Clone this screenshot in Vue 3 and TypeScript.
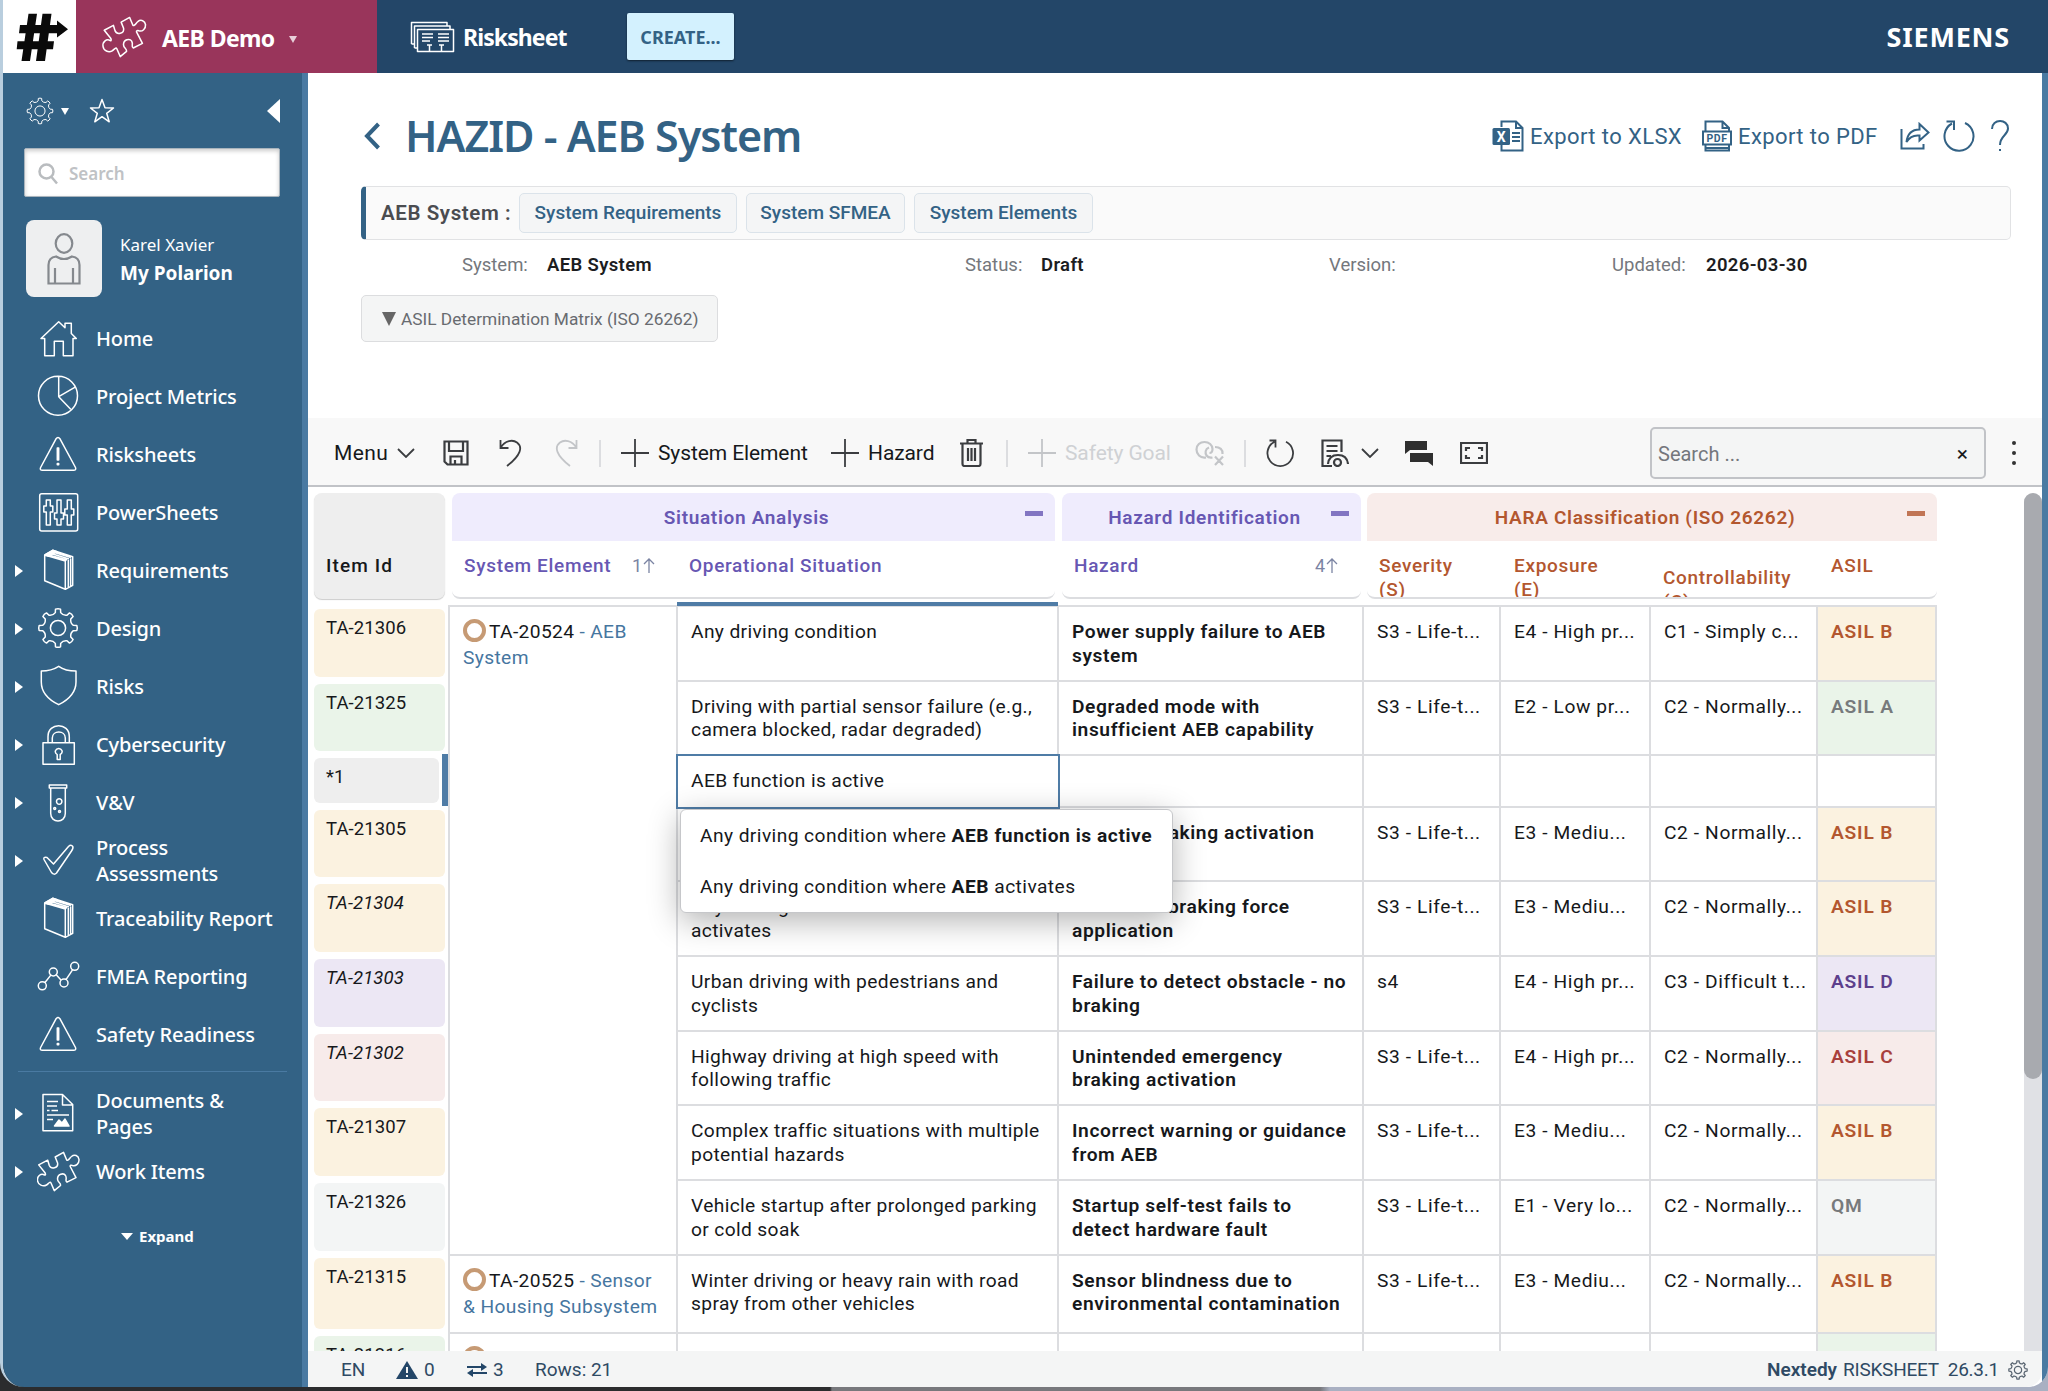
<script setup lang="ts">
import { ref } from "vue";

interface NavItem {
  label: string;
  icon: string;
  arrow?: boolean;
}

interface Row {
  id: string;
  level: string;
  situation: string;
  hazard: string;
  s: string;
  e: string;
  c: string;
  asil: string;
  italic?: boolean;
  size?: string;
}

// Outline of a cog with rounded teeth
const gear = (c: number, outer: number, inner: number, teeth: number, hole: number) => {
  const step = (Math.PI * 2) / teeth;
  const pt = (r: number, a: number) =>
    `${(c + r * Math.sin(a)).toFixed(2)} ${(c - r * Math.cos(a)).toFixed(2)}`;
  let d = `M${pt(outer, -step * 0.17)}`;
  for (let i = 0; i < teeth; i++) {
    const a = i * step;
    d += `Q${pt(outer + 0.8, a)} ${pt(outer, a + step * 0.17)}`;
    d += `L${pt(inner + 0.8, a + step * 0.22)}`;
    d += `Q${pt(inner - 1.6, a + step * 0.5)} ${pt(inner + 0.8, a + step * 0.78)}`;
    d += `L${pt(outer, a + step * 0.83)}`;
  }
  return `${d}ZM${c - hole} ${c}a${hole} ${hole} 0 1 0 ${hole * 2} 0a${hole} ${hole} 0 1 0 ${-hole * 2} 0`;
};

const puzzle =
  "M1.7 14.9L10.7 10.2L12.3 15.5C14 19.5 21.5 18.5 20.6 13L18.2 7L26.5 2.4L29.7 10C31 11.5 33 7.5 34.5 6.5C37.5 4 41.5 5.5 42 9.5C42.3 13.5 39 16.5 35.5 15.5C34 15 33 15.2 33.2 16.5L39 27.7L30 32.2C27.5 30.5 30.5 29 28.5 25.5C26.5 22.5 20.5 24 20.5 29C20.5 32.5 24 32.5 23.5 35.5L17.3 40.6L14 33C13 31 11.3 34 9.5 35C6 37 1 35 0.5 30.5C0 26 4 22.8 7.5 25C9 25.5 8.5 23.5 7.8 22.5Z";

const icons: Record<string, string> = {
  home: "M7.7 21.5V38.7H17.3V24.3H26.3V38.7H36V21.5H39.3L34.3 16.5V6.3H28V10.8L21.7 4.7L4 21.5Z",
  pie: "M1.5 20.7a19.5 19.5 0 1 0 39 0a19.5 19.5 0 1 0 -39 0M21.7 1.2V21.7L37.7 12.3M21.7 21.7L33.7 34.3",
  warn: "M19 5.8Q21 3 23 5.8L38.5 34.5Q39.5 37.3 36.5 37.3H5.5Q2.5 37.3 3.6 34.5ZM20.3 15h1.4v12h-1.4ZM20.3 30.5h1.4v1.2h-1.4Z",
  sliders:
    "M4.7 2.7H38.7Q40.7 2.7 40.7 4.7V38Q40.7 40 38.7 40H4.7Q2.7 40 2.7 38V4.7Q2.7 2.7 4.7 2.7ZM9.3 9h4v6h2.5v6h-2.5v13h-4v-13h-2.5v-6h2.5ZM20 9h4v13h2.5v6h-2.5v6h-4v-6h-2.5v-6h2.5ZM30.3 9h4v9h2.5v6h-2.5v10h-4v-10h-2.5v-6h2.5Z",
  book: "M7.7 6L28.3 12V40.3L7.7 31.7ZM7.7 6L15.7 1.3L35.7 7.7V36.3L28.3 40.3M31.3 11V38M33.6 9.5V37M10 5.5L30 11M12.5 4L32 10M14 2.5L34 8.5",
  gear: gear(21, 19, 14.8, 8, 7.6),
  shield:
    "M21.7 1.3C16 5 10 6 4.3 6V17C4.3 28 12 35 21.7 39.7C31 35 39 28 39 17V6C33 6 27 5 21.7 1.3Z",
  lock: "M6 19.7H37.3V41.3H6ZM11 19.7V13.5C11 -1 32.3 -1 32.3 13.5V19.7M15.3 19.7V15C15.3 7 28.3 7 28.3 15V19.7ZM20.2 36.5V31.5C16.5 29 19 25.5 21.7 25.5C24.5 25.5 27 29 23.2 31.5V36.5Z",
  tube: "M12.3 4H29.7V7H12.3ZM13.7 7V32.5C13.7 42.5 28.3 42.5 28.3 32.5V7M19.5 20.5a2.7 2.7 0 1 0 5.4 0a2.7 2.7 0 1 0 -5.4 0M16.7 27.5a1 1 0 1 0 2 0a1 1 0 1 0 -2 0M21.5 30.5a1 1 0 1 0 2 0a1 1 0 1 0 -2 0",
  check:
    "M7 20.5Q6 17.5 10 18.5L16.5 25L31.5 7.5Q34 5 35.8 7.5Q36.5 9 34.5 12L19.5 34Q17 36.5 14.5 33.5Z",
  chart:
    "M1.3 30.8a4 4 0 1 0 8 0a4 4 0 1 0 -8 0M12.3 17a4 4 0 1 0 8 0a4 4 0 1 0 -8 0M23 28a4 4 0 1 0 8 0a4 4 0 1 0 -8 0M33.7 11.3a4 4 0 1 0 8 0a4 4 0 1 0 -8 0M7.8 27.7L13.8 20.1M19.2 19.8L24.2 25.2M29 24.6L35.7 14.7",
  doc: "M6 2.5H25.5L35.7 12.5V38.7H6ZM25.5 2.5V13H35.7M10 9.5H21M10 14H20M10 18.5H12.5M14.5 18.5H21M10 23H32M10 27.5H16",
  puzzle,
};

const navItems: NavItem[] = [
  { label: "Home", icon: "home" },
  { label: "Project Metrics", icon: "pie" },
  { label: "Risksheets", icon: "warn" },
  { label: "PowerSheets", icon: "sliders" },
  { label: "Requirements", icon: "book", arrow: true },
  { label: "Design", icon: "gear", arrow: true },
  { label: "Risks", icon: "shield", arrow: true },
  { label: "Cybersecurity", icon: "lock", arrow: true },
  { label: "V&V", icon: "tube", arrow: true },
  { label: "Process\nAssessments", icon: "check", arrow: true },
  { label: "Traceability Report", icon: "book" },
  { label: "FMEA Reporting", icon: "chart" },
  { label: "Safety Readiness", icon: "warn" },
];

const libraryItems: NavItem[] = [
  { label: "Documents &\nPages", icon: "doc", arrow: true },
  { label: "Work Items", icon: "puzzle", arrow: true },
];

const rows: Row[] = [
  { id: "TA-21306", level: "b", situation: "Any driving condition", hazard: "Power supply failure to AEB\nsystem", s: "S3 - Life-t...", e: "E4 - High pr...", c: "C1 - Simply c...", asil: "ASIL B" },
  { id: "TA-21325", level: "a", situation: "Driving with partial sensor failure (e.g.,\ncamera blocked, radar degraded)", hazard: "Degraded mode with\ninsufficient AEB capability", s: "S3 - Life-t...", e: "E2 - Low pr...", c: "C2 - Normally...", asil: "ASIL A" },
  { id: "*1", level: "new", situation: "AEB function is active", hazard: "", s: "", e: "", c: "", asil: "", size: "51.5px" },
  { id: "TA-21305", level: "b", situation: "", hazard: "Delayed braking activation", s: "S3 - Life-t...", e: "E3 - Mediu...", c: "C2 - Normally...", asil: "ASIL B" },
  { id: "TA-21304", level: "b", italic: true, situation: "Any driving condition where AEB\nactivates", hazard: "Excessive braking force\napplication", s: "S3 - Life-t...", e: "E3 - Mediu...", c: "C2 - Normally...", asil: "ASIL B" },
  { id: "TA-21303", level: "d", italic: true, situation: "Urban driving with pedestrians and\ncyclists", hazard: "Failure to detect obstacle - no\nbraking", s: "s4", e: "E4 - High pr...", c: "C3 - Difficult t...", asil: "ASIL D" },
  { id: "TA-21302", level: "c", italic: true, situation: "Highway driving at high speed with\nfollowing traffic", hazard: "Unintended emergency\nbraking activation", s: "S3 - Life-t...", e: "E4 - High pr...", c: "C2 - Normally...", asil: "ASIL C" },
  { id: "TA-21307", level: "b", situation: "Complex traffic situations with multiple\npotential hazards", hazard: "Incorrect warning or guidance\nfrom AEB", s: "S3 - Life-t...", e: "E3 - Mediu...", c: "C2 - Normally...", asil: "ASIL B" },
  { id: "TA-21326", level: "qm", situation: "Vehicle startup after prolonged parking\nor cold soak", hazard: "Startup self-test fails to\ndetect hardware fault", s: "S3 - Life-t...", e: "E1 - Very lo...", c: "C2 - Normally...", asil: "QM" },
  { id: "TA-21315", level: "b", situation: "Winter driving or heavy rain with road\nspray from other vehicles", hazard: "Sensor blindness due to\nenvironmental contamination", s: "S3 - Life-t...", e: "E3 - Mediu...", c: "C2 - Normally...", asil: "ASIL B", size: "78px" },
  { id: "TA-21316", level: "a", situation: "Driving after vehicle windshield", hazard: "Gradually degrading", s: "S3 - Life-t...", e: "E3 - Mediu...", c: "C2 - Normally...", asil: "ASIL A" },
];

const elements = [
  { id: "TA-20524", name: "AEB\nSystem", start: 1, span: 9 },
  { id: "TA-20525", name: "Sensor\n& Housing Subsystem", start: 10, span: 1 },
  { id: "TA-20526", name: "Radar", start: 11, span: 1 },
];

const gridRows = rows.map((r) => r.size ?? "74.67px").join(" ");
const search = ref("");
const filter = ref("");
</script>

<template>
  <div class="screen">
    <div class="window">
      <header class="topbar">
        <div class="logo">
          <svg width="73" height="73" viewBox="3 0 73 73">
            <path d="M28.5 13.7H37L30 61H21.500ZM42.500 13.700H51.500L45 61H36ZM20 25H57V20.500L68 29.300L57 37.500V33.300H19ZM17.500 41.300H54L53 49.300H16.700Z" fill="#0a0a0a" />
          </svg>
        </div>
        <div class="project">
          <svg class="line" width="46" height="42" viewBox="-1 1 44 41"><path :d="puzzle" /></svg>
          <span class="project-name">AEB Demo</span>
          <span class="caret-down small" />
        </div>
        <div class="product">
          <svg class="line" width="45" height="32" viewBox="0 0 45 32">
            <path d="M7.5 8.5H43.5V30.5H7.5ZM4.5 27V5H40V8M1.5 23V1.5H37V5M1.5 23H4.5M4.5 27H7.5" />
            <path d="M12 13h11M12 16.5h11M12 20h8M28 13h11M28 16.5h11M28 20h11M17 24h5M19.5 24v6M29 24h5M31.5 24v6" />
          </svg>
          <span>Risksheet</span>
        </div>
        <button class="create">CREATE...</button>
        <span class="siemens">SIEMENS</span>
      </header>

      <div class="body">
        <nav class="sidebar">
          <div class="side-tools">
            <svg class="line" width="28" height="28" viewBox="0 0 42 42"><path :d="icons.gear" /></svg>
            <span class="caret-down" />
            <svg class="line star" width="26" height="26" viewBox="0 0 26 26">
              <path d="M13 1.5L16 9.8L24.5 10L17.7 15.3L20.2 23.8L13 18.7L5.8 23.8L8.3 15.3L1.5 10L10 9.8Z" />
            </svg>
            <span class="collapse" />
          </div>
          <div class="side-search">
            <svg width="21" height="22" viewBox="0 0 21 22" fill="none" stroke="#b9bcbf" stroke-width="2.5">
              <circle cx="8.5" cy="8.5" r="7" /><path d="M13.5 14L19 20.5" />
            </svg>
            <input v-model="search" placeholder="Search" />
          </div>
          <div class="user">
            <div class="avatar">
              <svg width="34" height="52" viewBox="0 0 34 52" fill="none" stroke="#85898e" stroke-width="2.2">
                <ellipse cx="17" cy="10.5" rx="8.3" ry="9.3" />
                <path d="M1.5 50.5V32Q1.5 24.5 9 23.5Q17 28.5 25 23.5Q32.5 24.5 32.5 32V50.5ZM8 35V50M26 35V50" />
              </svg>
            </div>
            <div>
              <div class="user-name">Karel Xavier</div>
              <div class="user-page">My Polarion</div>
            </div>
          </div>
          <ul>
            <li v-for="item in navItems" :key="item.label">
              <span class="arrow" :class="{ hidden: !item.arrow }" />
              <svg class="line" width="44" height="44" viewBox="0 0 44 44">
                <path :d="icons[item.icon]" />
                <path v-if="item.icon === 'book'" d="M8 6L15.7 1.3L20 2.7L12 7.2Z" fill="#fff" />
              </svg>
              <span class="label">{{ item.label }}</span>
            </li>
          </ul>
          <hr />
          <ul>
            <li v-for="item in libraryItems" :key="item.label">
              <span class="arrow" />
              <svg class="line" width="44" height="44" viewBox="0 0 44 44">
                <path :d="icons[item.icon]" />
                <path v-if="item.icon === 'doc'" d="M17.5 34L22 28L25 31L28 27L32 34Z" fill="#fff" />
              </svg>
              <span class="label">{{ item.label }}</span>
            </li>
          </ul>
          <div class="expand"><span class="caret-down wide" />Expand</div>
        </nav>

        <main>
          <section class="page-head">
            <div class="title-row">
              <svg class="back" width="18" height="28" viewBox="0 0 18 28"><path d="M15.5 2L4 14L15.5 26" /></svg>
              <h1>HAZID - AEB System</h1>
              <div class="actions">
                <svg width="32" height="32" viewBox="0 0 32 32">
                  <path class="ol" d="M9.5 7V1.5H24L30.5 8V30.5H9.5V25M24 1.5V8H30.5M20 13H28M20 17H28M20 21H28" />
                  <rect x="0.5" y="8" width="17.5" height="17" rx="1.5" fill="#336285" />
                  <text x="9.2" y="22" text-anchor="middle" font-size="14" font-weight="700" fill="#fff">X</text>
                </svg>
                <span class="export xlsx">Export to XLSX</span>
                <svg width="30" height="32" viewBox="0 0 30 32">
                  <path class="ol" d="M3.5 11V1.5H20.5L27 8V11M20.5 1.5V8H27M1 11.5H29V24.5H1ZM3.5 24.5V30.5H27V24.5M3.5 28H27" />
                  <text x="15" y="22" text-anchor="middle" font-size="10.5" font-weight="700" fill="#336285" letter-spacing="0.5">PDF</text>
                </svg>
                <span class="export pdf">Export to PDF</span>
                <svg class="share" width="30" height="28" viewBox="0 0 30 28">
                  <path class="ol" d="M1.5 7V26.5H23.5V22M6.5 20Q8 7.5 19.5 7.5V2L28.5 10.5L19.5 18.5V13.5Q11 12.5 6.5 20Z" />
                </svg>
                <svg class="reload" width="32" height="32" viewBox="0 0 32 32">
                  <path class="ol" d="M22 3A14.5 14.5 0 1 1 9 3.5M3.5 1.5H11V10" />
                </svg>
                <svg width="18" height="32" viewBox="0 0 18 32">
                  <path class="ol" d="M1 9C1 -1.5 17 -1.5 17 8.5C17 15 9 16 9 25M9 29V31" />
                </svg>
              </div>
            </div>
            <div class="crumbs">
              <strong>AEB System :</strong>
              <a class="w1">System Requirements</a>
              <a class="w2">System SFMEA</a>
              <a class="w3">System Elements</a>
            </div>
            <div class="info">
              <span>System:</span><b>AEB System</b>
              <span>Status:</span><b>Draft</b>
              <span>Version:</span>
              <span>Updated:</span><b>2026-03-30</b>
            </div>
            <button class="matrix"><span class="tri" />ASIL Determination Matrix (ISO 26262)</button>
          </section>

          <section class="toolbar">
            <span class="menu">Menu</span>
            <svg width="18" height="10" viewBox="0 0 18 10"><path d="M1 1L9 9L17 1" /></svg>
            <svg width="26" height="26" viewBox="0 0 26 26" class="thick">
              <path d="M1.5 1.5H24.5V24.5H4.5L1.5 21.5ZM6 1.5V11H20V1.5M7.5 24.5V16.5H18.5V24.5M12 20V24" />
            </svg>
            <svg width="23" height="28" viewBox="0 0 23 28"><path d="M1.5 1V9H9.5M1.5 9C6 1 14 0.5 18 3.5C24 8 22 16 8 27" /></svg>
            <svg width="23" height="28" viewBox="0 0 23 28" class="faded"><path d="M21.5 1V9H13.5M21.5 9C17 1 9 0.5 5 3.5C-1 8 1 16 15 27" /></svg>
            <i class="sep" />
            <span class="tool">
              <svg width="28" height="28" viewBox="0 0 28 28"><path d="M14 0V28M0 14H28" /></svg>
              <span>System Element</span>
            </span>
            <span class="tool">
              <svg width="28" height="28" viewBox="0 0 28 28"><path d="M14 0V28M0 14H28" /></svg>
              <span>Hazard</span>
            </span>
            <svg width="23" height="28" viewBox="0 0 23 28" class="thick"><path d="M0 4.5H23M7.5 4V1H15.5V4M2.5 4.5V25Q2.5 27 4.5 27H18.5Q20.5 27 20.5 25V4.5M8 9V22M11.5 9V22M15 9V22" /></svg>
            <i class="sep" />
            <span class="tool faded">
              <svg width="28" height="28" viewBox="0 0 28 28"><path d="M14 0V28M0 14H28" /></svg>
              <span>Safety Goal</span>
            </span>
            <svg width="30" height="26" viewBox="0 0 30 26" class="faded thick"><path d="M11 17.5C5 18.5 1.5 14 1.5 9.5C1.5 5 5 2 9.5 2C14 2 17.5 5 17.5 9C17.5 11.5 16 13 14.5 13M14 7.5C10 9 10 13 11.5 15.5C13 17.5 15 18 17.5 17.500M20 7C25 7 28 9.500 27.500 14M20 16.500L28 25M28 16.500L20 25" /></svg>
            <i class="sep" />
            <svg width="28" height="28" viewBox="0 0 28 28"><path d="M20 2.8A12.8 12.8 0 1 1 8.5 2.8M3.5 1.5H9.5V8.5" /></svg>
            <svg width="28" height="28" viewBox="0 0 28 28" class="thick"><path d="M11 27H1.5V1.5H20.5V13M5.5 7H16.5M5.5 12H16.5M5.5 17H10M7 25Q8 16 17 16Q26 16 27 25M13 23.5a3.5 3.5 0 1 0 7 0a3.5 3.5 0 1 0 -7 0" /></svg>
            <svg width="18" height="10" viewBox="0 0 18 10"><path d="M1 1L9 9L17 1" /></svg>
            <svg width="28" height="25" viewBox="0 0 28 25" class="solid"><path d="M0 0H22V9H5L0 13ZM5 12H28V25L23 21H5Z" /></svg>
            <svg width="28" height="22" viewBox="0 0 28 22" class="thick"><path d="M1 1H27V21H1ZM6 9V6H10M18 6H22V9M22 13V16H18M10 16H6V13" /></svg>
            <div class="filter">
              <input v-model="filter" placeholder="Search ..." />
              <span>×</span>
            </div>
            <span class="dots"><i /><i /><i /></span>
          </section>

          <section class="sheet">
            <div class="sheet-head">
              <div class="head-id">Item Id</div>
              <div class="group violet g1">
                <div class="group-title">Situation Analysis<i /></div>
                <div class="labels">
                  <span>System Element</span>
                  <em>1<svg width="12" height="15" viewBox="0 0 12 15"><path d="M6 15V1M1 6L6 1L11 6" /></svg></em>
                  <span>Operational Situation</span>
                </div>
              </div>
              <div class="group violet g2">
                <div class="group-title">Hazard Identification<i /></div>
                <div class="labels">
                  <span>Hazard</span>
                  <em>4<svg width="12" height="15" viewBox="0 0 12 15"><path d="M6 15V1M1 6L6 1L11 6" /></svg></em>
                </div>
              </div>
              <div class="group rust g3">
                <div class="group-title">HARA Classification (ISO 26262)<i /></div>
                <div class="labels">
                  <span>Severity<br />(S)</span>
                  <span>Exposure<br />(E)</span>
                  <span class="lower">Controllability<br />(C)</span>
                  <span>ASIL</span>
                </div>
              </div>
            </div>

            <div class="grid" :style="{ gridTemplateRows: gridRows }">
              <div
                v-for="el in elements"
                :key="el.id"
                class="cell element"
                :style="{ gridRow: `${el.start} / span ${el.span}` }"
              >
                <span class="ring" />{{ el.id }} <a>- {{ el.name }}</a>
              </div>
              <template v-for="(row, i) in rows" :key="row.id">
                <div class="id-cell" :class="{ current: row.level === 'new' }" :style="{ gridRow: i + 1 }">
                  <div class="pill" :class="[row.level, { italic: row.italic }]">{{ row.id }}</div>
                </div>
                <div class="cell situation" :class="{ first: i === 0 }" :style="{ gridRow: i + 1 }">
                  <div v-if="row.level === 'new'" class="editor">
                    {{ row.situation }}
                    <div class="suggest">
                      <div>Any driving condition where <b>AEB function is active</b></div>
                      <div>Any driving condition where <b>AEB</b> activates</div>
                    </div>
                  </div>
                  <template v-else>{{ row.situation }}</template>
                </div>
                <div class="cell hazard" :style="{ gridRow: i + 1 }">{{ row.hazard }}</div>
                <div class="cell rate c-s" :style="{ gridRow: i + 1 }">{{ row.s }}</div>
                <div class="cell rate c-e" :style="{ gridRow: i + 1 }">{{ row.e }}</div>
                <div class="cell rate c-c" :style="{ gridRow: i + 1 }">{{ row.c }}</div>
                <div class="cell asil" :class="row.level" :style="{ gridRow: i + 1 }">{{ row.asil }}</div>
              </template>
            </div>
            <div class="scroll"><div class="thumb" /></div>
          </section>

          <footer>
            <span>EN</span>
            <span>
              <svg width="22" height="18" viewBox="0 0 22 18"><path d="M11 0L22 18H0Z" fill="#234668" /><path d="M11 6V12M11 14V16" stroke="#f4f5f5" stroke-width="2" /></svg>
              0
            </span>
            <span>
              <svg width="20" height="14" viewBox="0 0 20 14"><path d="M0 4H16M4 10H20" stroke="#234668" stroke-width="2" /><path d="M14 0L20 4L14 8ZM6 6L0 10L6 14Z" fill="#234668" /></svg>
              3
            </span>
            <span>Rows: 21</span>
            <span class="version"><b>Nextedy</b> RISKSHEET&nbsp; 26.3.1</span>
            <svg width="20" height="20" viewBox="0 0 42 42" fill="none" stroke="#5a6672" stroke-width="2.6"><path :d="icons.gear" /></svg>
          </footer>
        </main>
      </div>
    </div>
  </div>
</template>

<style>
body {
  margin: 0;
  background: #2d2e30;
}
</style>

<style scoped>
.screen {
  width: 2048px;
  height: 1391px;
  overflow: hidden;
  background: linear-gradient(90deg, #2b2c2e 0 830px, #77787c 832px 1320px, #a9b0c2 1330px);
  font-family: Roboto, "Liberation Sans", sans-serif;
  color: #16181b;
}

.window {
  height: 1387px;
  box-sizing: border-box;
  border-left: 3px solid #b9cede;
  display: flex;
  flex-direction: column;
  border-radius: 0 0 20px 24px;
  overflow: hidden;
}

svg {
  flex: none;
  display: block;
}

.line {
  fill: none;
  stroke: #fff;
  stroke-width: 1.5;
  stroke-linejoin: round;
}

/* Top bar */
.topbar {
  height: 73px;
  flex: none;
  display: flex;
  align-items: center;
  background: #234668;
  color: #fff;
  font-family: "Noto Sans", sans-serif;
}

.logo {
  width: 73px;
  height: 73px;
  background: #fff;
}

.project {
  width: 301px;
  height: 73px;
  box-sizing: border-box;
  padding-left: 25px;
  display: flex;
  align-items: center;
  background: #99355b;
}

.project-name {
  margin: 3px 13px 0 15px;
  width: 114px;
  font-size: 23px;
  font-weight: 700;
  letter-spacing: -0.6px;
  white-space: nowrap;
}

.caret-down {
  border: 4px solid transparent;
  border-top: 7px solid #fff;
  border-bottom: 0;
}

.caret-down.small {
  margin-top: 6px;
  border-top-color: #e8cfd9;
}

.caret-down.wide {
  border-width: 7px 6px 0;
  margin-right: 6px;
}

.product {
  width: 217px;
  margin-left: 33px;
  display: flex;
  align-items: center;
  gap: 8px;
  font-size: 23px;
  font-weight: 700;
  letter-spacing: -0.9px;
}

.create {
  width: 107px;
  height: 47px;
  border: 0;
  padding: 0;
  border-radius: 2px;
  background: #d3f1fe;
  color: #336285;
  font: 700 18px "Noto Sans", sans-serif;
  letter-spacing: 0;
  box-shadow: 0 1px 2px #10202f;
}

.siemens {
  margin-left: auto;
  margin-right: 38px;
  font-size: 27px;
  font-weight: 700;
  letter-spacing: 0.8px;
}

.body {
  flex: 1;
  display: flex;
  min-height: 0;
}

/* Sidebar */
.sidebar {
  width: 305px;
  flex: none;
  box-sizing: border-box;
  border-right: 6px solid #4a7aa2;
  background: #336285;
  color: #fff;
  font-family: "Noto Sans", sans-serif;
}

.side-tools {
  height: 75px;
  box-sizing: border-box;
  padding: 1px 22px 0 23px;
  display: flex;
  align-items: center;
}

.side-tools .caret-down {
  margin-left: 7px;
}

.star {
  margin-left: 20px;
}

.collapse {
  margin-left: auto;
  border: 12px solid transparent;
  border-right: 13px solid #fff;
  border-left: 0;
}

.side-search {
  width: 256px;
  height: 49px;
  box-sizing: border-box;
  margin-left: 21px;
  padding: 2px 13px 0;
  display: flex;
  align-items: center;
  background: #fff;
  border: 1px solid #a9b4bd;
  border-radius: 2px;
  box-shadow: inset 0 2px 4px rgba(0, 0, 0, 0.2);
}

input {
  border: 0;
  outline: 0;
  background: none;
  min-width: 0;
  flex: 1;
}

.side-search input {
  margin-left: 10px;
  padding: 0;
  font: 600 17px "Noto Sans", sans-serif;
}

.side-search input::placeholder {
  color: #bfc2c5;
}

.user {
  margin: 23px 0 13px 23px;
  display: flex;
  align-items: center;
  gap: 18px;
}

.avatar {
  width: 76px;
  height: 77px;
  display: flex;
  align-items: center;
  justify-content: center;
  border-radius: 8px;
  background: #eeeff0;
}

.user-name {
  font-size: 17px;
  line-height: 28px;
}

.user-page {
  font-size: 19px;
  font-weight: 700;
  line-height: 28px;
}

ul {
  list-style: none;
  margin: 0;
  padding: 0;
}

li {
  height: 58px;
  display: flex;
  align-items: center;
}

.arrow {
  margin: 0 14px 0 12px;
  border: 6px solid transparent;
  border-left: 8px solid #fff;
  border-right: 0;
}

.arrow.hidden {
  visibility: hidden;
}

.label {
  margin-left: 15px;
  font-size: 20px;
  font-weight: 500;
  line-height: 26px;
  letter-spacing: -0.15px;
  white-space: pre-line;
}

hr {
  height: 1px;
  width: 269px;
  margin: 7px 0 13px 15px;
  border: 0;
  background: #4a7aa2;
}

.expand {
  margin-top: 25px;
  padding-left: 118px;
  display: flex;
  align-items: center;
  font-size: 15px;
  font-weight: 700;
}

/* Page header */
main {
  width: 1734px;
  display: flex;
  flex-direction: column;
  background: #fff;
  border-right: 6px solid #4a7aa2;
}

.page-head {
  height: 345px;
  box-sizing: border-box;
  padding: 27px 31px 0 53px;
}

.title-row {
  height: 72px;
  display: flex;
  align-items: center;
}

.back {
  margin-left: 2px;
}

.back path {
  fill: none;
  stroke: #336285;
  stroke-width: 4;
}

h1 {
  margin: -2px 0 0 24px;
  font: 600 43px "Noto Sans", sans-serif;
  letter-spacing: -1px;
  color: #336285;
}

.actions {
  margin: 0 2px 0 auto;
  display: flex;
  align-items: center;
}

.actions text {
  font-family: Roboto, sans-serif;
}

.ol {
  fill: none;
  stroke: #336285;
  stroke-width: 2;
}

.export {
  margin-left: 6px;
  font-size: 22px;
  letter-spacing: 0.4px;
  color: #336285;
  white-space: nowrap;
}

.xlsx {
  width: 172px;
}

.pdf {
  width: 162px;
}

.reload {
  margin: 0 16px 0 13px;
}

.crumbs {
  height: 54px;
  box-sizing: border-box;
  margin-top: 14px;
  padding-left: 15px;
  display: flex;
  align-items: center;
  gap: 9px;
  border: 1px solid #e1e2e4;
  border-left: 5px solid #336285;
  border-radius: 5px;
  background: #fafafa;
}

.crumbs strong {
  width: 129px;
  font-size: 20.5px;
  font-weight: 600;
  letter-spacing: 0.6px;
  color: #4a4c50;
  white-space: nowrap;
}

.crumbs a {
  height: 40px;
  box-sizing: border-box;
  line-height: 38px;
  text-align: center;
  border: 1px solid #dbe3ea;
  border-radius: 5px;
  background: #f4f5f6;
  color: #336285;
  font-size: 19px;
  font-weight: 500;
}

.w1 {
  width: 218px;
}

.w2 {
  width: 159px;
}

.w3 {
  width: 179px;
}

.info {
  margin-top: 13px;
  padding-left: 101px;
  display: grid;
  grid-template-columns: 85px 418px 76px 288px 283px 94px 120px;
  font-size: 18.5px;
  line-height: 24px;
  color: #74777c;
}

.info b {
  color: #1c1d1f;
  font-weight: 600;
  letter-spacing: 0.35px;
}

.matrix {
  margin-top: 18px;
  width: 357px;
  height: 47px;
  padding: 0 0 0 20px;
  display: flex;
  align-items: center;
  border: 1px solid #dcdddf;
  border-radius: 5px;
  background: #f4f5f5;
  color: #686b70;
  font: 17.3px Roboto, sans-serif;
}

.tri {
  margin-right: 5px;
  border: 7px solid transparent;
  border-top: 14px solid #666;
  border-bottom: 0;
}

/* Toolbar */
.toolbar {
  height: 69px;
  flex: none;
  box-sizing: border-box;
  padding: 3px 0 0 26px;
  display: grid;
  align-items: center;
  grid-template-columns: 63px 46px 56px 56px 44px 22px 210px 129px 46px 22px 167px 49px 22px 55px 40px 44px 55px 190px 362px 10px;
  background: #f8f8f8;
  border-bottom: 2px solid #c1c3c7;
  font-size: 21px;
  white-space: nowrap;
}

.toolbar path {
  fill: none;
  stroke: #3b3d40;
  stroke-width: 1.8;
}

.toolbar .solid path {
  fill: #2f2f2f;
  stroke: none;
}

.toolbar .thick path {
  stroke-width: 2.2;
}

.toolbar .faded path {
  stroke: #c3c5c8;
}

.sep {
  width: 2px;
  height: 27px;
  background: #dcdde0;
}

.menu {
  letter-spacing: 0.4px;
}

.tool {
  display: flex;
  align-items: center;
  gap: 9px;
  letter-spacing: -0.1px;
}

.tool.faded {
  color: #cfd1d4;
}

.filter {
  width: 336px;
  height: 52px;
  box-sizing: border-box;
  padding: 2px 16px 0 6px;
  display: flex;
  align-items: center;
  border: 2px solid #c1c3c7;
  border-radius: 5px;
  background: #f4f5f5;
}

.filter input {
  padding: 0;
  font: 20px Roboto, sans-serif;
}

.filter input::placeholder {
  color: #74777c;
}

.dots {
  display: grid;
  gap: 6px;
}

.dots i {
  width: 4px;
  height: 4px;
  border-radius: 50%;
  background: #333;
}

/* Sheet */
.sheet {
  position: relative;
  flex: 1;
  min-height: 0;
  overflow: hidden;
}

.sheet-head {
  height: 118px;
  box-sizing: border-box;
  padding: 6px 0 0 6px;
  display: flex;
  gap: 7px;
}

.head-id {
  width: 131px;
  height: 106px;
  box-sizing: border-box;
  padding: 61px 0 0 12px;
  border-radius: 8px;
  background: #eee;
  box-shadow: 0 1px 1px #ccc;
  font-size: 19px;
  font-weight: 500;
  line-height: 24px;
  letter-spacing: 1.1px;
}

.group {
  height: 106px;
  border-radius: 8px;
  overflow: hidden;
  border-bottom: 2px solid #dcdde0;
  box-sizing: border-box;
  font-size: 19px;
  font-weight: 600;
  letter-spacing: 0.68px;
}

.violet {
  color: #6757b3;
}

.rust {
  color: #b3572f;
}

.g1 {
  width: 603px;
}

.g2 {
  width: 299px;
}

.g3 {
  width: 570px;
  margin-left: -1px;
}

.group-title {
  height: 48px;
  line-height: 49px;
  padding: 0 12px 0 16px;
  display: grid;
  grid-template-columns: 1fr 18px;
  text-align: center;
  background: #efecfd;
  white-space: nowrap;
}

.rust .group-title {
  background: #f8ecea;
}

.group-title i {
  height: 5px;
  margin-top: 18px;
  background: currentColor;
  opacity: 0.8;
}

.labels {
  display: grid;
  padding: 13px 0 0 12px;
  line-height: 23.5px;
  font-weight: 500;
}

.labels em {
  display: flex;
  align-items: center;
  gap: 1px;
  font-style: normal;
  font-weight: 400;
  font-size: 18px;
  letter-spacing: 0;
  color: #7b84a3;
}

.labels em path {
  fill: none;
  stroke: #7b84a3;
  stroke-width: 1.3;
}

.g1 .labels {
  grid-template-columns: 168px 57px 1fr;
}

.g2 .labels {
  grid-template-columns: 241px 1fr;
}

.g3 .labels {
  grid-template-columns: 135px 149px 168px 1fr;
}

.lower {
  padding-top: 12px;
}

.grid {
  display: grid;
  grid-template-columns: 140px 228px 381px 305px 137px 150px 167px 121px;
}

.id-cell {
  grid-column: 1;
  padding: 4px 3px 2px 6px;
  display: flex;
}

.id-cell.current {
  padding-right: 0;
  border-right: 6px solid #4f7ca6;
}

.id-cell.current .pill {
  margin-right: 3px;
}

.pill {
  flex: 1;
  padding: 7px 0 0 12px;
  margin-bottom: 1px;
  border-radius: 6px;
  font-size: 18.5px;
  line-height: 24px;
  letter-spacing: 0.1px;
}

.pill.italic {
  font-style: italic;
}

.pill.new {
  background: #eee;
}

.a {
  background: #eaf4e9;
}

.b {
  background: #fbf2e0;
}

.c {
  background: #f7ebea;
}

.d {
  background: #ece7f4;
}

.qm {
  background: #f3f5f5;
}

.cell {
  border: 0 solid #dcdde0;
  border-width: 2px 0 0 2px;
  padding: 13px 0 0 13px;
  font-size: 19.2px;
  line-height: 23.7px;
  letter-spacing: 0.36px;
  white-space: pre;
}

.element {
  grid-column: 2;
  padding: 12px 0 0 13px;
  line-height: 26px;
}

.element a {
  color: #46769f;
}

.ring {
  display: inline-block;
  width: 15px;
  height: 15px;
  margin-right: 3px;
  vertical-align: -4px;
  border: 4px solid #c69a74;
  border-radius: 50%;
}

.situation {
  grid-column: 3;
  position: relative;
}

/* Bar that marks the active column */
.first::before {
  content: "";
  position: absolute;
  top: -5px;
  left: -1px;
  right: -1px;
  height: 4px;
  background: #4f7ca6;
}

.hazard {
  grid-column: 4;
  font-weight: 600;
  letter-spacing: 0.6px;
}

.rate {
  letter-spacing: 0.6px;
}

.c-s {
  grid-column: 5;
}

.c-e {
  grid-column: 6;
}

.c-c {
  grid-column: 7;
}

.asil {
  grid-column: 8;
  border-right-width: 2px;
  font-weight: 600;
  letter-spacing: 0.8px;
  color: #b3572f;
}

.asil.a,
.asil.qm {
  color: #777a7c;
}

.asil.c {
  color: #a8403c;
}

.asil.d {
  color: #5d3f8c;
}

/* Editing cell with its suggestion list */
.editor {
  position: relative;
  width: 367px;
  height: 38px;
  margin: -15px 0 0 -15px;
  padding: 13px 0 0 13px;
  border: 2px solid #4f7ca6;
  background: #fff;
  z-index: 2;
}

.suggest {
  position: absolute;
  top: 53px;
  left: 2px;
  width: 491px;
  height: 102px;
  border: 1px solid #c6c7ca;
  border-radius: 6px;
  background: #fff;
  box-shadow: 0 8px 32px rgba(0, 0, 0, 0.3);
  letter-spacing: 0.42px;
}

.suggest div {
  padding: 14px 0 0 19px;
  height: 37px;
}

.suggest b {
  letter-spacing: 0.55px;
}

.scroll {
  position: absolute;
  top: 6px;
  right: 0;
  width: 18px;
  height: 100%;
  background: #e0e1e5;
  border-radius: 9px 9px 0 0;
}

.thumb {
  height: 586px;
  border-radius: 9px;
  background: #a8aaaf;
}

footer {
  height: 36px;
  flex: none;
  box-sizing: border-box;
  padding: 1px 15px 0 33px;
  display: grid;
  grid-template-columns: 55px 71px 68px 1232px 241px 20px;
  align-items: center;
  background: #f4f5f5;
  border-radius: 0 0 16px 0;
  color: #2f4a64;
  font-size: 19px;
  white-space: nowrap;
}

footer span {
  display: flex;
  align-items: center;
  gap: 6px;
}

.version {
  letter-spacing: -0.25px;
}

.version b {
  font-weight: 600;
  letter-spacing: 0;
}
</style>
